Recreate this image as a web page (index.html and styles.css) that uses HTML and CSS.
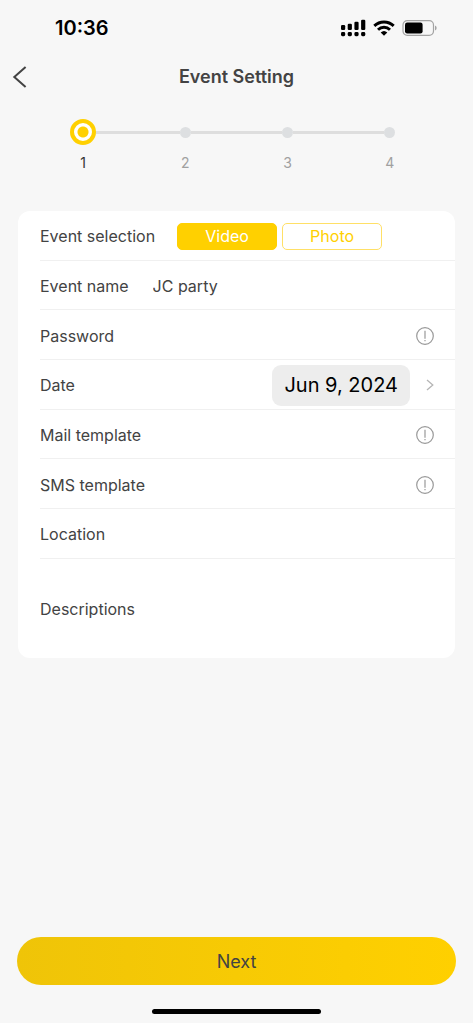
FILE: index.html
```html
<!DOCTYPE html>
<html lang="en">
<head>
<meta charset="utf-8">
<meta name="viewport" content="width=device-width, initial-scale=1">
<title>Event Setting</title>
<link rel="stylesheet" href="styles.css">
</head>
<body>
<div class="status">
  <time class="clock">10:36</time>
  <div class="indicators">
    <svg width="25" height="18" viewBox="0 0 25 18" aria-hidden="true">
      <rect x="0" y="6" width="4.2" height="5" rx="1.2"/><rect x="6.7" y="4.7" width="4.2" height="6.300" rx="1.2"/><rect x="13.400" y="2.700" width="4.200" height="8.300" rx="1.200"/><rect x="20.100" y="0.700" width="4.200" height="10.300" rx="1.200"/>
      <rect x="0" y="13" width="4.200" height="4.200" rx="1.400"/><rect x="6.700" y="13" width="4.200" height="4.200" rx="1.400"/><rect x="13.400" y="13" width="4.200" height="4.200" rx="1.400"/><rect x="20.100" y="13" width="4.200" height="4.200" rx="1.400"/>
    </svg>
    <svg width="22" height="16" viewBox="0 0 22 16" aria-hidden="true">
      <g fill="none" stroke="#000" stroke-width="2.9">
        <path d="M1.300 5.900a14 14 0 0 1 19.400 0"/><path d="M5 9.700a8.600 8.600 0 0 1 12 0"/>
      </g>
      <path d="M7.700 12.400a4.900 4.900 0 0 1 6.600 0L11 15.800Z"/>
    </svg>
    <svg width="36" height="16" viewBox="0 0 36 16" aria-hidden="true">
      <rect x="1" y="0.600" width="30.500" height="14.800" rx="4.300" fill="none" stroke="#a3a3a3" stroke-width="1.200"/>
      <rect x="3" y="2.600" width="17.600" height="10.800" rx="2.200"/>
      <path d="M33 5.500a2.700 2.700 0 0 1 0 5Z" fill="#a3a3a3"/>
    </svg>
  </div>
</div>
<header class="titlebar">
  <button class="icon-button back" type="button" aria-label="Back">
    <svg width="16" height="22" viewBox="0 0 16 22" fill="none" stroke="#434343" stroke-width="2"><path d="M13.600 1 2.300 11l11.300 10"/></svg>
  </button>
  <h1 class="title">Event Setting</h1>
</header>
<ol class="steps">
  <li class="step current" aria-current="step"><span class="track"><span class="dot"></span></span>1</li>
  <li class="step"><span class="track"><span class="dot"></span></span>2</li>
  <li class="step"><span class="track"><span class="dot"></span></span>3</li>
  <li class="step"><span class="track"><span class="dot"></span></span>4</li>
</ol>
<form class="form" id="event-form">
  <div class="row">
    <span class="label" id="selection-label">Event selection</span>
    <div class="choices" role="group" aria-labelledby="selection-label">
      <button class="choice selected" type="button" aria-pressed="true">Video</button>
      <button class="choice" type="button" aria-pressed="false">Photo</button>
    </div>
  </div>
  <div class="row">
    <label class="label" for="name">Event name</label>
    <input class="field" id="name" type="text" value="JC party">
  </div>
  <div class="row">
    <label class="label" for="password">Password</label>
    <input class="field" id="password" type="password">
    <button class="icon-button" type="button" aria-label="About the password">
      <svg width="18" height="18" viewBox="0 0 18 18" fill="none" stroke="#999"><circle cx="9" cy="9" r="8.300" stroke-width="1.200"/><path d="M9 3.800v8M9 13v1.200" stroke-width="1.200"/></svg>
    </button>
  </div>
  <div class="row">
    <label class="label" for="date">Date</label>
    <button class="date" id="date" type="button">Jun 9, 2024</button>
    <svg class="chevron" width="8" height="12" viewBox="0 0 8 12" fill="none" stroke="#b5b5b5" stroke-width="1.300" aria-hidden="true"><path d="m1 1 5.800 5L1 11"/></svg>
  </div>
  <div class="row">
    <label class="label" for="mail">Mail template</label>
    <input class="field" id="mail" type="text">
    <button class="icon-button" type="button" aria-label="About the mail template">
      <svg width="18" height="18" viewBox="0 0 18 18" fill="none" stroke="#999"><circle cx="9" cy="9" r="8.300" stroke-width="1.200"/><path d="M9 3.800v8M9 13v1.200" stroke-width="1.200"/></svg>
    </button>
  </div>
  <div class="row">
    <label class="label" for="sms">SMS template</label>
    <input class="field" id="sms" type="text">
    <button class="icon-button" type="button" aria-label="About the SMS template">
      <svg width="18" height="18" viewBox="0 0 18 18" fill="none" stroke="#999"><circle cx="9" cy="9" r="8.300" stroke-width="1.200"/><path d="M9 3.800v8M9 13v1.200" stroke-width="1.200"/></svg>
    </button>
  </div>
  <div class="row">
    <label class="label" for="location">Location</label>
    <input class="field" id="location" type="text">
  </div>
  <div class="row">
    <label class="label" for="descriptions">Descriptions</label>
    <textarea class="field" id="descriptions" rows="3"></textarea>
  </div>
</form>
<footer class="footer">
  <button class="next" type="submit" form="event-form">Next</button>
  <div class="home-bar"></div>
</footer>
</body>
</html>
```
FILE: styles.css
```css
* { box-sizing: border-box; }

body {
  display: flex;
  flex-direction: column;
  min-height: 100vh;
  margin: 0;
  background: #f7f7f7;
  color: #434343;
  font: 16px/20px Inter, "Liberation Sans", sans-serif;
}

button, input, textarea {
  margin: 0;
  padding: 0;
  border: 0;
  background: none;
  color: inherit;
  font: inherit;
}

svg { display: block; }

.status {
  display: flex;
  align-items: center;
  justify-content: space-between;
  height: 56px;
  padding: 0 35px 0 55px;
}

.clock {
  color: #000;
  font-size: 20px;
  font-weight: 600;
}

.indicators {
  display: flex;
  align-items: center;
  gap: 7px;
}

.titlebar {
  display: grid;
  grid-template-columns: 48px 1fr 48px;
  align-items: center;
  height: 42px;
}

.icon-button { flex: none; }

.back { padding-left: 12px; }

.title {
  margin: 0;
  font-size: 18px;
  font-weight: 600;
  text-align: center;
}

.steps {
  display: grid;
  grid-template-columns: repeat(4, 1fr);
  margin: 21px 0 0;
  padding: 0 32px;
  list-style: none;
}

.step {
  color: #a0a0a0;
  font-size: 14px;
  text-align: center;
}

.track {
  display: flex;
  align-items: center;
  height: 26px;
  margin-bottom: 8px;
}

.track::before,
.track::after {
  content: "";
  flex: 1;
  height: 3px;
  background: #dedede;
}

.step:first-child .track::before,
.step:last-child .track::after { background: none; }

.dot {
  width: 11px;
  height: 11px;
  border-radius: 50%;
  background: #dddfe1;
}

.current { color: #333; }

.current .dot {
  width: 26px;
  height: 26px;
  border: 4px solid #ffd000;
  background: radial-gradient(circle, #ffd000 5px, #fff 6px);
}

.form {
  display: grid;
  grid-template-rows: repeat(7, 1fr) 2fr;
  min-height: 447px;
  margin: 38px 18px 24px;
  padding-left: 22px;
  border-radius: 12px;
  background: #fff;
}

.row {
  display: flex;
  align-items: center;
  padding: 2px 21px 0 0;
  border-bottom: 1px solid #f0f0f0;
}

.row:last-child { border-bottom: 0; }

.label { flex: none; }

.field {
  flex: 1;
  min-width: 0;
  margin-left: 24px;
  outline: 0;
  resize: none;
}

.choices {
  display: flex;
  gap: 5px;
  margin-left: 22px;
}

.choice {
  width: 100px;
  height: 27px;
  border: 1px solid #ffe066;
  border-radius: 5px;
  color: #ffd000;
}

.selected {
  border-color: #ffd000;
  background: #ffd000;
  color: #fff;
}

.date {
  height: 41px;
  margin-left: auto;
  padding: 0 12px;
  border-radius: 9px;
  background: #ededed;
  color: #000;
  font-size: 20px;
}

.chevron { margin-left: 16px; }

.footer {
  margin-top: auto;
  padding: 0 17px 9px;
}

.next {
  width: 100%;
  height: 48px;
  padding-top: 2px;
  border-radius: 24px;
  background: linear-gradient(90deg, #efc408, #ffd000);
  font-size: 18px;
}

.home-bar {
  width: 169px;
  height: 5px;
  margin: 24px auto 0;
  border-radius: 3px;
  background: #000;
}
```
